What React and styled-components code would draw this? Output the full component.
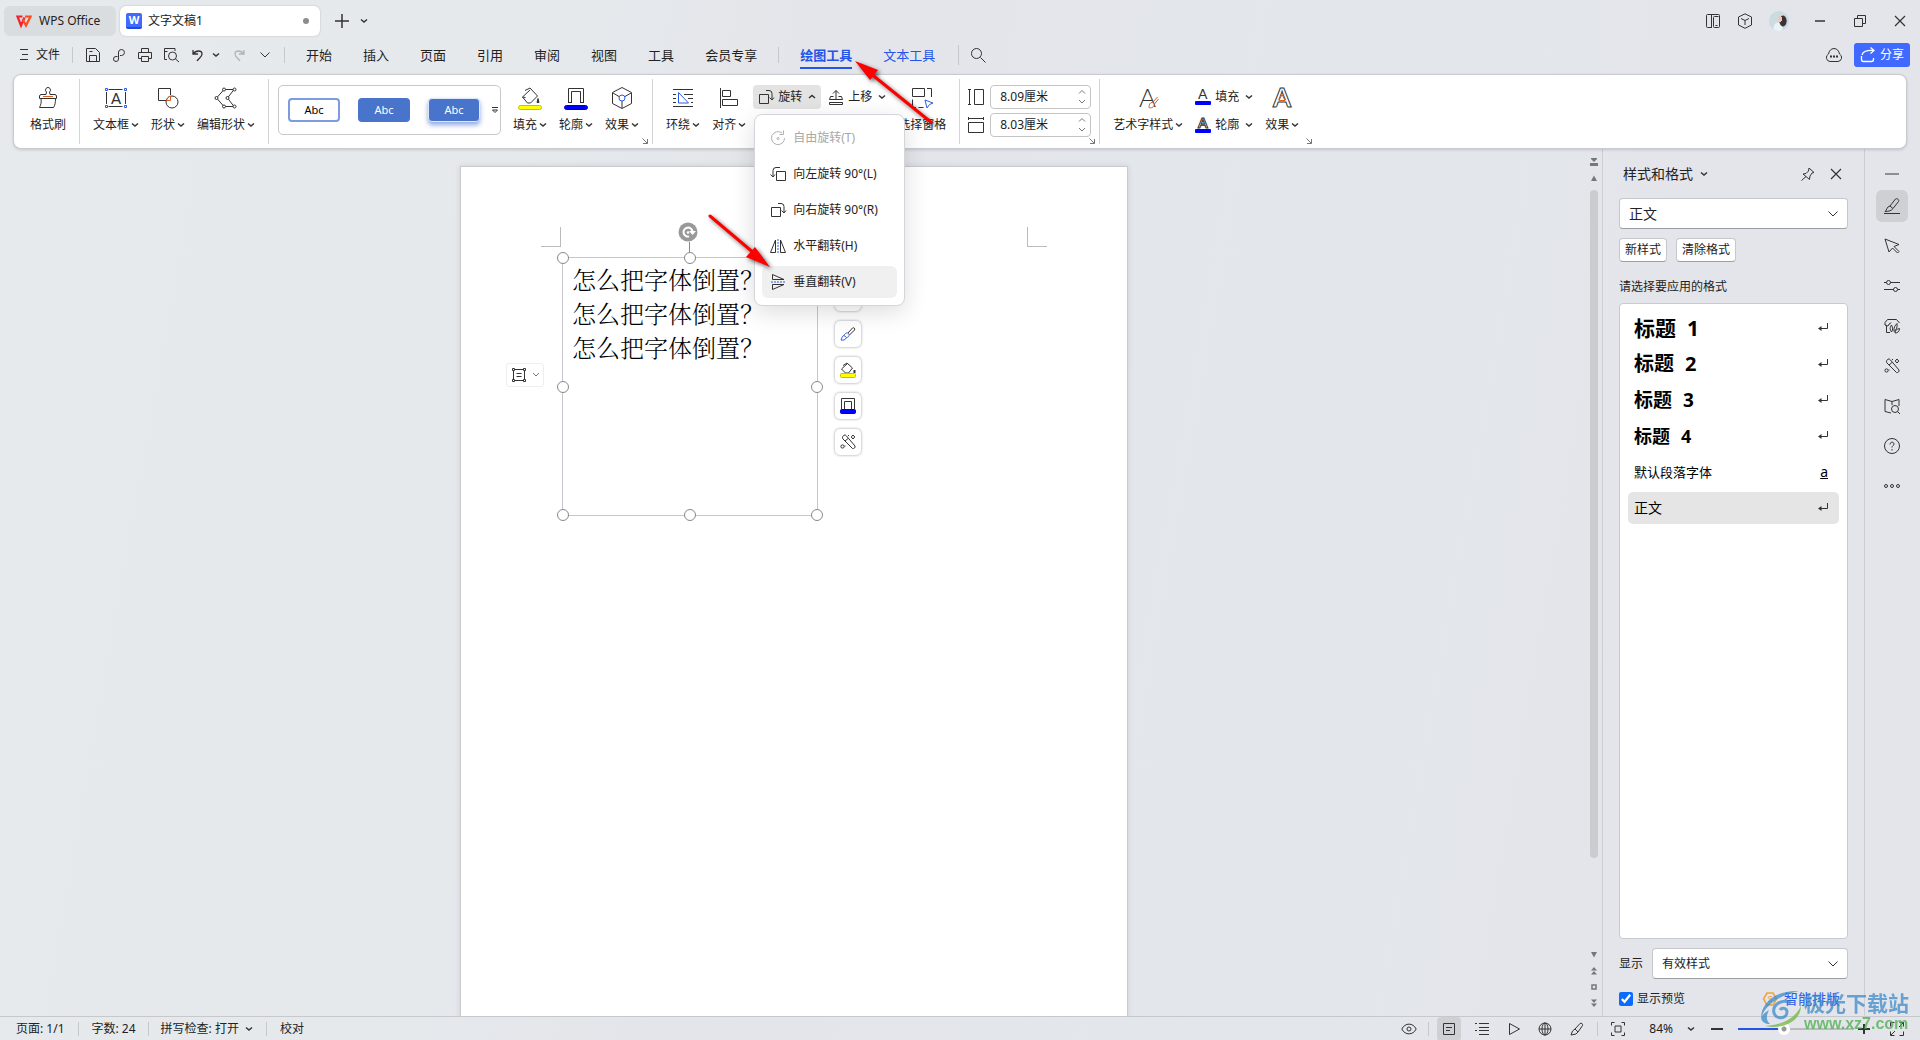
import React from "react";
import styled, { createGlobalStyle } from "styled-components";

const GlobalStyle = createGlobalStyle`
  * {
    box-sizing: border-box;
  }
  body {
    margin: 0;
    font-family: "Noto Sans", "Noto Sans CJK SC", sans-serif;
    font-size: 12px;
    line-height: 16px;
    color: #222;
  }
  button, input, select {
    font: inherit;
    color: inherit;
  }
  button {
    border: none;
    background: none;
    padding: 0;
    cursor: pointer;
  }
`;

/* ---------- icons ---------- */

// every icon is [width, height, shapes]
const icons = {
  wps: [16, 12, <g strokeWidth="2.200"><path d="M6.500 1.500H1.500L5 10.500l3.500-8" stroke="#f0222c" /><path d="M6.500 4l3.500 6.500 4.500-9H9" stroke="#ff4a1c" /></g>],
  plus: [16, 16, <path d="M8 1v14M1 8h14" strokeWidth="1.500" />],
  down: [8, 6, <path d="M1 1.500l3 2.500 3-2.500" strokeWidth="1.500" />],
  up: [8, 6, <path d="M1 4l3-2.500L7 4" strokeWidth="1.500" />],
  wide: [12, 8, <path d="M1.500 1.500L6 6l4.500-4.500" />],
  thin: [8, 6, <path d="M1 1l3 3 3-3" stroke="#777" />],
  thinUp: [8, 6, <path d="M1 4.500l3-3 3 3" stroke="#777" />],
  menu: [10, 12, <path d="M0 .5h8M2 5.500h6M0 10.500h8" />],
  save: [16, 16, <path d="M1.500 2v12.500h13V5.500L10.500 1.500h-9zM4.500 14.500v-6h7v6M4.500 4.500h3" />],
  link: [16, 16, <path d="M6.500 9.500H5A2.500 2.500 0 1 0 7.500 12V5a3 3 0 1 1 3 3.500H9" />],
  print: [16, 16, <path d="M4.500 5V1.500h7V5M4 11.500H1.500v-6h13v6H12M4.500 9.500h7v5h-7z" />],
  preview: [17, 16, <g><path d="M4 12.500H1.500v-11H12V4M1.500 4.500h3" /><circle cx="9.500" cy="9" r="4" /><path d="M12.500 12l3.500 3" /></g>],
  undo: [14, 14, <path d="M2 2v4h5M2 6c3-4 9-4 9 0 0 3-3 4-5 7" strokeWidth="1.300" />],
  redo: [14, 14, <path d="M12 2v4H7M12 6C9 2 3 2 3 6c0 3 3 4 5 7" stroke="#b0b3b8" strokeWidth="1.300" />],
  search: [16, 16, <g><circle cx="6.500" cy="6.500" r="5" /><path d="M10.500 10.500l5 5" /></g>],
  split: [16, 16, <path d="M7 14.500H2.500a1 1 0 0 1-1-1v-11a1 1 0 0 1 1-1h11a1 1 0 0 1 1 1v11a1 1 0 0 1-1 1h-4a1 1 0 0 1-1-1v-9a1 1 0 0 1 1-1h4M6.500 1.500v13M10.500 12.500h2" />],
  cube: [16, 16, <path d="M8 .8l6.500 3.200v8L8 15.300 1.500 12V4zM4 5.500l4 2 4-2M8 7.500V12" />],
  min: [12, 12, <path d="M1 6h10" strokeWidth="1.500" />],
  restore: [12, 12, <path d="M.5 3.500h8v8h-8zM3.500 3.500v-3h8v8h-3" />],
  close: [12, 12, <path d="M1 1l10 10M11 1L1 11" strokeWidth="1.200" />],
  cloud: [18, 16, <g><path d="M5 14.500a4 4 0 0 1-1.500-7.500C4 4 6 1.500 9 1.500S14 4 14.500 7A4 4 0 0 1 13 14.500z" /><path d="M5 9.500h2M8 9.500h2M11 9.500h2" strokeWidth="2" /></g>],
  share: [16, 16, <path d="M1.500 9v3.500a2 2 0 0 0 2 2h8a2 2 0 0 0 2-2V11M2 8c1-4 5-5 12-4.500M10.500 .5l3.500 3-3.500 3" stroke="#fff" strokeWidth="1.300" />],
  brush: [24, 24, <g><path d="M10 8.500l.5-2.500a2.500 2.500 0 1 1 3 0l.5 2.500h5a2 2 0 0 1 1.500 1.500v2.500H3.500V10A2 2 0 0 1 5 8.500zM5 12.500c.5 4 0 6-1.500 9h14c1.500-2 2-5 2-9" /><path d="M7 10.500h10" stroke="#d9601f" /></g>],
  textbox: [24, 24, <g><path d="M4.500 3.500h14M4.500 20.500h14M2.500 6v12M21.500 6v12" /><path d="M1.500 2.500h2v2h-2zM20.500 2.500h2v2h-2zM1.500 19.500h2v2h-2zM20.500 19.500h2v2h-2z" stroke="#2c5be8" /><text x="7" y="18" fontSize="15" fontFamily="Lato">A</text></g>],
  shapes: [24, 24, <g><path d="M12 14.500H2.500v-12h12V9" /><circle cx="16" cy="16" r="6" /><path d="M14.500 10v4.500H10.500c.5-2 2-4 4-4.500z" stroke="#d9601f" /></g>],
  editShape: [24, 24, <g><path d="M2.500 12L10 3.500h10L13.500 12l6.500 8.500H10z" /><g fill="#fff"><circle cx="2.500" cy="12" r="1.500" /><circle cx="10" cy="3.500" r="1.500" /><circle cx="20.500" cy="3.500" r="1.500" /><circle cx="13.500" cy="12" r="1.500" /><circle cx="20.500" cy="20.500" r="1.500" /><circle cx="10" cy="20.500" r="1.500" /></g></g>],
  fill: [24, 24, <g><path d="M7 4.500L12 2l7.500 8-7 7h-3L4.500 11 12 4M4.500 11l3 .5" /><path d="M20 12.500l1 4h-2z" fill="#333" /><rect x=".5" y="19.500" width="23" height="4" rx="2" fill="#ff0" stroke="#c2c200" /></g>],
  outline: [24, 24, <g><path d="M4.500 17V2.500h15V17M7.500 17V5.500h9V17M4.500 16.500h3M16.500 16.500h3" /><rect x=".5" y="19.500" width="23" height="4" rx="2" fill="#00f" stroke="#0000c8" /></g>],
  effect: [24, 24, <g><path d="M12 1.500L21.500 6.500v11L12 22.500 2.500 17.500v-11zM3 7l6 3.500M21 7l-6 3.500M12 15v7" /><circle cx="12" cy="12" r="3" stroke="#2c5be8" /></g>],
  wrap: [24, 24, <g><path d="M2 3.500h20M2 20.500h20M2 8.500h3M2 12.500h3M2 16.500h3M13 8.500h9M17 12.500h5M20 16.500h2" /><path d="M7.500 6.500v10.500h10z" stroke="#2c5be8" /></g>],
  align: [24, 24, <path d="M3.500 2v20M5.500 4.500h8v6h-8zM5.500 13.500h15v6h-15z" />],
  rotR: [16, 16, <path d="M1.500 5.500h9v9h-9zM8 1.500h3a3 3 0 0 1 3 3v6M11.500 8.500l2.500 2.500 2-2.500" />],
  rotL: [16, 16, <path d="M6.500 5.500h9v9h-9zM10 1.500H6a3 3 0 0 0-3 3v6M.5 8.500l2.500 2.500 2-2.500" />],
  forward: [16, 16, <path d="M8 10V1.500M5 4.500l3-3 3 3M5.500 7.500h-3l-1 3h13l-1-3h-3M1.500 13.500h13v2h-13z" />],
  pane: [24, 24, <g><path d="M2.500 2.500h12v8h-12zM17 2.500h4.500v8.500M2.500 13.500v8H6M8.500 21.500h5" /><path d="M15 14l8 3-3.500 1.500L17 22z" stroke="#2c5be8" /></g>],
  height: [16, 16, <path d="M1.500 .5v15M0 .5h3M0 15.500h3M6.500 .5h9v15h-9z" />],
  width: [16, 16, <path d="M.5 1.500h15M.5 0v3M15.500 0v3M.5 5.500h15v10H.5z" />],
  wordArt: [24, 24, <g><text x="3" y="21" fontSize="26" fontFamily="Lato" fontWeight="300">A</text><path d="M13 21.500c0-3 1-5 3-5s3 3 1 4.500-4 .5-4 .5zM17 16l4.500-5M18.500 18l4-5" stroke="#d9601f" fill="#fff" /></g>],
  textFill: [16, 16, <g><text x="3" y="10" fontSize="14" fontFamily="Lato">A</text><rect y="12" width="16" height="4" rx="1" fill="#00f" stroke="none" /></g>],
  textLine: [16, 16, <g><text x="3" y="11" fontSize="14" fontFamily="Lato" fontWeight="700" stroke="#333">A</text><rect y="12" width="16" height="4" rx="1" fill="#00f" stroke="none" /></g>],
  textEffect: [24, 24, <g><text x="3" y="21" fontSize="26" fontFamily="Lato" fontWeight="700" stroke="#333">A</text><path d="M12 8.500l3 6H9z" stroke="#d9601f" fill="#fff" /></g>],
  launcher: [6, 6, <path d="M.5 .5l5 5M5.500 1v4.500H1" stroke="#777" />],
  more: [8, 8, <path d="M1 1.500h6M1.500 4L4 6.500 6.500 4z" />],
  free: [16, 16, <g stroke="#b0b0b0"><path d="M12 3a6.500 6.500 0 1 0 2.500 5M9.500 4.500h4v-4" /><circle cx="8" cy="8.500" r="1" /></g>],
  flipH: [16, 16, <g><path d="M5.500 2v12.500h-5zM10.500 2v12.500h5z" /><path d="M8 1v14" stroke="#2c5be8" strokeDasharray="2 1" /></g>],
  flipV: [16, 16, <g><path d="M2.500 5.500v-5L14 5.500zM2.500 10.500v5L14 10.500z" /><path d="M1 8h15" stroke="#2c5be8" strokeDasharray="2 1" /></g>],
  turn: [20, 20, <g><circle cx="10" cy="10" r="9.500" fill="#999" stroke="none" /><path d="M11 14.500a4.500 4.500 0 1 1 3.500-5" stroke="#fff" strokeWidth="2" /><path d="M11 9h7l-3.500 4z" fill="#fff" stroke="none" /><circle cx="10" cy="10.500" r="1.300" fill="#fff" stroke="none" /></g>],
  options: [16, 16, <g><path d="M3 2.500h9M3 13.500h9M2.500 3v10M13.500 3v10M5.500 6.500h5M5.500 9.500h5" /><path d="M1.500 1.500h2v2h-2zM12.500 1.500h2v2h-2zM1.500 12.500h2v2h-2zM12.500 12.500h2v2h-2z" fill="#fff" /></g>],
  pen: [16, 16, <g><path d="M8 7l4.500-5c1-1 3 .5 2 2L9.500 9" /><path d="M1 14c1-1 .5-4 3-4.500C5 7.500 7 6 8.500 7.500s0 4-2 4C5.500 14 3 14.500 1 14zM4 9.500l2.500 2" stroke="#2c5be8" /></g>],
  fillS: [16, 16, <g><path d="M3 3.500L7 1l5.500 5-4 5h-3L1.500 7 7 2" /><path d="M14.500 8v3" strokeWidth="2" /><rect x=".5" y="11.500" width="15" height="4" rx="1" fill="#ff0" stroke="#c2c200" /></g>],
  outlineS: [16, 16, <g><path d="M1.500 11V.5h13V11M4.500 11V3.500h7V11" /><rect x=".5" y="11.500" width="15" height="4" rx="1" fill="#00f" stroke="#0000c8" /></g>],
  wand: [16, 16, <g><path d="M3.500 1.500a2 2 0 0 1 3 .5l8.500 10c.5 1.500-1 3-2.500 2.500L3 5c-1-1-.5-2.500.5-3.500zM5 7l3-2.500" /><circle cx="2.500" cy="12.500" r="1.600" /><path d="M8 1.500h1M5 11.500v1" /><path d="M13 1l1.800 2L13 5l-1.800-2z" /></g>],
  pin: [14, 14, <path d="M8 1l5 4.500-2 .5-2 3-.5 3.500L2 7l3-.5L7.500 4zM5 9.500L.5 13.500" />],
  dash: [14, 4, <path d="M0 2h14" stroke="#8d8e92" strokeWidth="2" />],
  format: [16, 16, <path d="M0 15.500h16M1 13.500c2-1 1.500-5 5-5.500l5.500-7c1.500-1 4 .5 3 2.500L9 10.500c-1.500 2-4 3-8 3zM6 8l3 2.500" />],
  cursor: [16, 16, <path d="M1 1l14 5.500-5 2 5 5-1.500 1.500-5-5L5 14z" />],
  sliders: [16, 16, <g><path d="M0 4.500h2.500M6.500 4.500H16M0 11.500h9.500M13.500 11.500H16" /><circle cx="4.500" cy="4.500" r="2" /><circle cx="11.500" cy="11.500" r="2" /></g>],
  image: [16, 16, <path d="M2.500 7v7.500H6M1 6.500V4.500L3.500 1.500h9L15.500 5M1 6a2 2 0 0 0 4 0 2 2 0 0 0 2-1.500M7.500 14c-2-3-1.500-5 0-7 1.500 3 1.500 5 0 7zM10 13.500c-.5-4 1-6 3-8 .5 4-.5 6-3 8zM11 15c0-3 2-4 4.500-4.500 0 3-2 4.500-4.500 4.500z" />],
  book: [16, 16, <g><path d="M8 3.500L1 1.500v12l6 1.500M8 3.500l7-2V8M8 3.500V7" /><circle cx="11" cy="11" r="3.500" /><path d="M13.500 13.500L16 16" /></g>],
  help: [16, 16, <g><circle cx="8" cy="8" r="7.500" /><path d="M6 6.500c0-3 4-3 4-.5 0 1.500-2 1.500-2 3.500M8 11v1.500" /></g>],
  dots: [16, 16, <g><circle cx="2" cy="8" r="1.500" /><circle cx="8" cy="8" r="1.500" /><circle cx="14" cy="8" r="1.500" /></g>],
  enter: [10, 10, <g><path d="M9.500 0v5.500H1" /><path d="M0 5.500L3.500 3v5z" fill="#333" stroke="none" /></g>],
  eye: [16, 16, <g><path d="M.8 8C4 1.500 12 1.500 15.200 8 12 14.500 4 14.500.8 8z" /><circle cx="8" cy="8" r="2" /></g>],
  doc: [14, 14, <path d="M1.500 1.500h11v11h-11zM4 5.500h6M4 8.500h4" />],
  outlineView: [14, 14, <path d="M0 1.500h2M4 1.500h10M4 5.500h10M0 8.500h2M4 8.500h10M4 12.500h10" />],
  play: [14, 14, <path d="M2.500 1.500l10 5.500-10 5.500z" />],
  globe: [14, 14, <g><circle cx="7" cy="7" r="6" /><ellipse cx="7" cy="7" rx="3" ry="6" /><path d="M1 7h12M7 1v12" /></g>],
  marker: [14, 14, <path d="M5 7l5-5.500c1.500-1 3 .5 2.500 2L8 10M5 7l3 3-2 2-5 1 1.500-4z" />],
  fit: [14, 14, <path d="M.5 3.500v-3h3M10.500 .5h3v3M13.500 10.500v3h-3M3.500 13.500h-3v-3M4 4h6v6H4z" />],
  full: [14, 14, <path d="M.5 4.500v-4h4M9.500 .5h4v4M13.500 9.500v4h-4M4.500 13.500h-4v-4M9 5l4-4M5 9l-4 4" />],
  minus: [12, 12, <path d="M0 6h12" strokeWidth="2" />],
  add: [12, 12, <path d="M0 6h12M6 1v10" strokeWidth="2" />],
  markTop: [8, 8, <g stroke="none" fill="#777"><path d="M1 0h6v1L4 4 1 1zM0 5h8v3H0z" /></g>],
  triUp: [6, 6, <path d="M3 .5L6 6H0z" fill="#777" stroke="none" />],
  triDown: [6, 6, <path d="M3 5.500L6 0H0z" fill="#777" stroke="none" />],
  pageUp: [6, 8, <path d="M3 0l3 3.500H0zM3 4l3 3.500H0z" fill="#777" stroke="none" />],
  pageDown: [6, 8, <path d="M3 8L0 4.500h6zM3 4L0 .5h6z" fill="#777" stroke="none" />],
  browse: [6, 6, <path d="M1 1h4v4H1z" stroke="#777" strokeWidth="1.500" />],
  coin: [14, 14, <g stroke="#f0a23c"><path d="M4 1h6l3.500 6L10 13H4L.5 7z" strokeWidth="1.500" /><path d="M9 4.500H6.500c-1.500 0-1.500 2 0 2.500h1c1.500.5 1.500 2.500 0 2.500H5" /></g>],
};

const Svg = styled.svg`
  display: block;
  flex: none;
  overflow: visible;
  fill: none;
  stroke: #333;

  text {
    fill: #333;
    stroke: none;
  }
  text[stroke] {
    fill: #fff;
    stroke: #333;
  }
`;

function Icon({ name }) {
  const [w, h, shape] = icons[name];
  return <Svg width={w} height={h} viewBox={`0 0 ${w} ${h}`} aria-hidden="true">{shape}</Svg>;
}

/* ---------- shell ---------- */

const Shell = styled.div`
  position: relative;
  display: flex;
  flex-direction: column;
  height: 100vh;
  overflow: hidden;
  background: linear-gradient(100deg, #e6eaec 0%, #e5e9ec 25%, #e4e5ea 40%, #e3e7eb 70%, #e4e5ea 82%);
`;

const TitleBar = styled.header`
  display: flex;
  align-items: center;
  height: 36px;
  padding: 6px 10px 0 4px;
`;

const WindowTab = styled.button`
  display: flex;
  align-items: center;
  gap: ${(p) => (p.$active ? 6 : 7)}px;
  width: ${(p) => (p.$active ? 200 : 112)}px;
  height: 30px;
  margin-right: 4px;
  padding: 0 ${(p) => (p.$active ? "11px 0 6px" : "12px")};
  border-radius: 6px;
  background: ${(p) => (p.$active ? "#fff" : "#dadddf")};
  box-shadow: ${(p) => (p.$active ? "0 0 2px #b4b7ba" : "none")};
`;

const DocLogo = styled.span`
  width: 16px;
  height: 16px;
  border-radius: 2px;
  border-bottom: 2px solid #1f49d8;
  background: #3f69ff;
  color: #fff;
  font: bold 11px/14px "Open Sans", sans-serif;
  text-align: center;
`;

const Dirty = styled.span`
  width: 6px;
  height: 6px;
  margin-left: auto;
  border-radius: 3px;
  background: #8c8c8c;
`;

const IconButton = styled.button`
  display: flex;
  align-items: center;
  justify-content: center;
  flex: none;
  width: ${(p) => p.$w || 26}px;
  height: ${(p) => p.$h || 24}px;
  border-radius: ${(p) => p.$round || 4}px;
  background: ${(p) => (p.$active ? "#cfd0d4" : "none")};
`;

const Right = styled.div`
  display: flex;
  align-items: center;
  margin-left: auto;
`;

const Avatar = styled.span`
  width: 20px;
  height: 20px;
  margin: 0 21px 0 8px;
  border-radius: 50%;
  background:
    radial-gradient(ellipse 2px 3px at 11px 8px, #ecc9bd 90%, transparent),
    radial-gradient(ellipse 4px 6px at 14px 10px, #3d3138 80%, transparent),
    radial-gradient(ellipse 5px 6px at 9px 17px, #e9f3f5 80%, transparent),
    #cbdbe0;
`;

const MenuBar = styled.nav`
  display: flex;
  align-items: center;
  height: 38px;
  padding: 0 10px 0 20px;
`;

const FileButton = styled.button`
  display: flex;
  align-items: center;
  gap: 6px;
`;

const Split = styled.span`
  flex: none;
  width: 1px;
  height: ${(p) => p.$h || 16}px;
  margin: 0 ${(p) => p.$after || p.$gap || 12}px 0 ${(p) => p.$gap || 12}px;
  background: #c6c8cb;
`;

const Tabs = styled.div`
  display: flex;
  align-items: center;
  gap: 31px;
`;

const Tab = styled.button`
  position: relative;
  height: 28px;
  font-size: 13px;
  color: ${(p) => (p.$blue ? "#2554e8" : "#222")};
  font-weight: ${(p) => (p.$active ? 700 : 400)};
  border-top: 2px solid transparent;
  border-bottom: 2px solid ${(p) => (p.$active ? "#2554e8" : "transparent")};
`;

const ShareButton = styled.button`
  display: flex;
  align-items: center;
  gap: 4px;
  height: 24px;
  margin-left: 11px;
  padding: 0 6px;
  border-radius: 3px;
  background: #3f69ff;
  color: #fff;
`;

/* ---------- ribbon ---------- */

const Ribbon = styled.section`
  display: flex;
  position: relative;
  z-index: 2;
  height: 75px;
  margin: 0 13px;
  padding: 4px 0;
  border: 1px solid #c9cbcf;
  border-radius: 8px;
  background: #fff;
  box-shadow: 0 1px 3px rgba(0, 0, 0, 0.15);
`;

const Group = styled.div`
  display: flex;
  gap: 12px;
  position: relative;
  padding: 6px ${(p) => p.$right ?? 13}px 0 ${(p) => p.$left ?? 13}px;
  border-right: ${(p) => (p.$last ? "none" : "1px solid #d5d5d5")};
`;

const BigButton = styled.button`
  display: flex;
  flex-direction: column;
  align-items: center;
  align-self: flex-start;
  gap: 6px;

  > svg {
    margin: 1px 0;
  }
`;

const Caption = styled.span`
  display: flex;
  align-items: center;
  gap: 2px;
  white-space: nowrap;
`;

const Gallery = styled.div`
  display: flex;
  align-items: center;
  gap: 18px;
  width: 223px;
  height: 50px;
  padding-left: 9px;
  border: 1px solid #c8c8c8;
  border-radius: 5px;
`;

const Swatch = styled.button`
  flex: none;
  width: 52px;
  height: 24px;
  border-radius: 4px;
  border: ${(p) => (p.$kind === "line" ? "2px solid #7d9be0" : p.$kind === "glow" ? "1px solid #dfe7f8" : "none")};
  background: ${(p) => (p.$kind === "line" ? "#fff" : "#4874cb")};
  color: ${(p) => (p.$kind === "line" ? "#000" : "#fff")};
  box-shadow: ${(p) => (p.$kind === "glow" ? "0 3px 5px #8ea8e0" : "none")};
  font-size: 11px;
  line-height: 14px;
`;

const GalleryMore = styled.button`
  margin-left: -7px;
`;

const Stack = styled.div`
  display: flex;
  flex-direction: column;
  gap: 4px;
`;

const ArrangeRow = styled.div`
  display: flex;
  gap: 2px;
  margin: 0 -5px;
`;

const SmallButton = styled.button`
  display: flex;
  align-items: center;
  gap: 4px;
  height: 24px;
  padding: 0 ${(p) => (p.$tight ? 0 : 5)}px;
  border-radius: 4px;
  background: ${(p) => (p.$open ? "#e3e3e3" : "none")};

  > svg:last-child {
    margin-left: 2px;
  }
`;

const Anchor = styled.div`
  position: relative;
`;

const Launcher = styled.button`
  position: absolute;
  right: ${(p) => (p.$last ? 0 : 4)}px;
  bottom: 0;
`;

const Field = styled.label`
  display: flex;
  align-items: center;
  gap: 6px;
`;

const SpinBox = styled.span`
  display: flex;
  width: 101px;
  height: 24px;
  padding: 0 4px 0 9px;
  border: 1px solid #c4c4c4;
  border-radius: 4px;

  input {
    flex: 1;
    min-width: 0;
    padding: 0;
    border: none;
    outline: none;
    background: none;
  }
`;

const Steps = styled.span`
  display: flex;
  flex-direction: column;
  justify-content: space-between;
  padding: 3px 0;
`;

/* ---------- drop-down menu ---------- */

const Menu = styled.ul`
  position: absolute;
  top: 29px;
  left: 1px;
  display: flex;
  flex-direction: column;
  gap: 4px;
  width: 151px;
  margin: 0;
  padding: 7px;
  list-style: none;
  border: 1px solid #d4d5da;
  border-radius: 8px;
  background: #fff;
  box-shadow: 0 6px 24px rgba(0, 0, 0, 0.14);
`;

const MenuItem = styled.button`
  display: flex;
  align-items: center;
  gap: 7px;
  width: 100%;
  height: 32px;
  padding-left: 8px;
  border-radius: 6px;
  white-space: nowrap;
  background: ${(p) => (p.$hover ? "#f0f0f0" : "none")};
  color: #222;

  &:disabled {
    color: #a8a8a8;
  }
`;

/* red pointer laid over whatever it points at */
const Pointer = styled.svg`
  position: absolute;
  z-index: 5;
  top: ${(p) => p.$top}px;
  left: ${(p) => p.$left}px;
  overflow: visible;
  pointer-events: none;
  fill: #f00;
  stroke: #f00;
  filter: drop-shadow(2px 2px 2px rgba(0, 0, 0, 0.6));
`;

/* ---------- work area ---------- */

const Body = styled.div`
  display: flex;
  flex: 1;
  min-height: 0;
`;

const Canvas = styled.main`
  flex: 1;
  min-width: 0;
  padding-top: 17px;
  overflow: hidden;
`;

const Page = styled.article`
  width: 668px;
  height: 943px;
  margin: 0 auto;
  padding-top: 60px;
  border: 1px solid #c9cbcd;
  background: #fff;
  box-shadow: 0 0 6px rgba(0, 0, 0, 0.1);
`;

const Corners = styled.div`
  display: flex;
  justify-content: space-between;
  height: 20px;
  padding: 0 80px;
`;

const Corner = styled.span`
  width: 20px;
  border-bottom: 1px solid #bbb;
  border-right: ${(p) => (p.$left ? "1px solid #bbb" : "none")};
  border-left: ${(p) => (p.$left ? "none" : "1px solid #bbb")};
`;

const TextBox = styled.div`
  position: relative;
  width: 256px;
  height: 259px;
  margin: 10px 0 0 101px;
  padding: 4px 9px;
  border: 1px solid #c5c6ce;
`;

const Line = styled.p`
  margin: 0;
  font: 24px/34px "Noto Serif CJK SC", "Noto Sans CJK SC", serif;
  font-weight: 300;
  color: #000;
  white-space: nowrap;
`;

const Handle = styled.span`
  position: absolute;
  left: ${(p) => p.$x}%;
  top: ${(p) => p.$y}%;
  width: 12px;
  height: 12px;
  margin: -6px;
  border: 1px solid #888;
  border-radius: 50%;
  background: #fff;
`;

const TurnHandle = styled.button`
  position: absolute;
  top: -36px;
  left: 115px;

  &::after {
    content: "";
    position: absolute;
    top: 20px;
    left: 11px;
    height: 10px;
    border-left: 1px solid #888;
  }
`;

const LayoutButton = styled.button`
  position: absolute;
  top: 105px;
  left: -57px;
  display: flex;
  align-items: center;
  justify-content: center;
  gap: 5px;
  width: 38px;
  height: 24px;
  border: 1px solid #eee;
  border-radius: 3px;
  background: #fff;
`;

const FloatBar = styled.div`
  position: absolute;
  top: 27px;
  right: -44px;
  display: flex;
  flex-direction: column;
  gap: 10px;
`;

const FloatButton = styled.button`
  display: flex;
  align-items: center;
  justify-content: center;
  width: 26px;
  height: 26px;
  border-radius: 5px;
  background: #fff;
  box-shadow: 0 0 3px rgba(0, 0, 0, 0.4);
`;

const ScrollColumn = styled.div`
  display: flex;
  flex-direction: column;
  align-items: center;
  gap: 9px;
  width: 14px;
  padding: 9px 3px 9px 0;
`;

const Thumb = styled.span`
  width: 8px;
  height: 668px;
  margin-bottom: auto;
  border-radius: 4px;
  background: #cbccd0;
`;

/* ---------- style panel ---------- */

const Panel = styled.aside`
  display: flex;
  flex-direction: column;
  width: 262px;
  padding: 14px 16px 5px;
  border-left: 1px solid #cdced2;
`;

const PanelHead = styled.div`
  display: flex;
  align-items: center;
  gap: 7px;
  height: 22px;
  margin: 0 6px 13px 4px;
`;

const PanelTitle = styled.h2`
  margin: 0;
  font-size: 14px;
  font-weight: 400;
`;

const SelectBox = styled.span`
  display: flex;
  align-items: center;
  flex: ${(p) => (p.$grow ? 1 : "none")};
  height: 31px;
  border: 1px solid #c6c7cb;
  border-bottom-color: #9d9ea2;
  border-radius: 4px;
  background: #fff;

  select {
    flex: 1;
    height: 28px;
    padding-left: 9px;
    border: none;
    outline: none;
    appearance: none;
    background: none;
    font-size: ${(p) => (p.$grow ? 12 : 14)}px;
  }
  svg {
    margin-right: 8px;
  }
`;

const PanelButtons = styled.div`
  display: flex;
  gap: 9px;
  margin: 9px 0 17px;
`;

const PanelButton = styled.button`
  height: 24px;
  padding: 0 5px;
  border: 1px solid #c6c7cb;
  border-bottom-color: #9d9ea2;
  border-radius: 4px;
  background: #fff;
`;

const StyleList = styled.ul`
  display: flex;
  flex-direction: column;
  flex: 1;
  gap: 4px;
  margin: 8px 0 9px;
  padding: 8px;
  list-style: none;
  border: 1px solid #c9cacf;
  border-radius: 4px;
  background: #fff;
`;

const StyleItem = styled.button`
  display: flex;
  align-items: center;
  gap: 11px;
  width: 100%;
  height: 32px;
  padding: 0 11px 0 6px;
  border-radius: 5px;
  background: ${(p) => (p.$selected ? "#e5e5e5" : "none")};
  color: #000;
  font-size: ${(p) => p.$size}px;
  font-weight: ${(p) => (p.$bold ? 700 : 400)};

  > :last-child {
    margin-left: auto;
  }
`;

const CharMark = styled.span`
  font-size: 14px;
  text-decoration: underline;
`;

const FootRow = styled.div`
  display: flex;
  align-items: center;
  gap: 9px;

  & + & {
    margin-top: 8px;
  }
`;

const Preview = styled.label`
  display: flex;
  align-items: center;
  gap: 4px;
  height: 24px;

  input {
    width: 14px;
    height: 14px;
    margin: 0;
    accent-color: #0a6cff;
  }
`;

const SmartLink = styled.a`
  display: flex;
  align-items: center;
  gap: 7px;
  margin-left: auto;
  padding-right: 8px;
  color: #2c5be8;
  font-size: 14px;
  text-decoration: none;
`;

const SideStrip = styled.aside`
  display: flex;
  flex-direction: column;
  align-items: center;
  gap: 8px;
  width: 56px;
  padding: 17px 1px 0 0;
  border-left: 1px solid #cdced2;
`;

/* ---------- status bar ---------- */

const StatusBar = styled.footer`
  display: flex;
  align-items: center;
  height: 24px;
  padding-left: 16px;
  border-top: 1px solid #c6c8cb;
`;

const StatusText = styled.button`
  display: flex;
  align-items: center;
  gap: 6px;
`;

const ZoomValue = styled(StatusText)`
  padding-left: 18px;
`;

const Zoom = styled.input`
  width: 116px;
  height: 12px;
  margin: 0 0 0 13px;
  appearance: none;
  background: linear-gradient(90deg, #2554e8 40%, #b9bbc0 40%) center / 100% 2px no-repeat;

  &::-webkit-slider-thumb {
    appearance: none;
    width: 12px;
    height: 12px;
    border-radius: 50%;
    background: radial-gradient(circle, #999 2px, #fff 3px);
  }
`;

const Watermark = styled.div`
  position: absolute;
  z-index: 6;
  right: 11px;
  bottom: 8px;
  display: flex;
  align-items: center;
  gap: 3px;
  opacity: 0.75;
  pointer-events: none;
`;

const MarkName = styled.div`
  color: #3c8bc9;
  font: bold 21px/28px "Noto Sans CJK SC", sans-serif;
`;

const MarkUrl = styled.div`
  color: #4cae4f;
  font: bold 16px/16px "Liberation Sans", sans-serif;
`;

/* ---------- pieces ---------- */

function Big({ icon, children, plain }) {
  return (
    <BigButton>
      <Icon name={icon} />
      <Caption>
        {children}
        {!plain && <Icon name="down" />}
      </Caption>
    </BigButton>
  );
}

function Small({ icon, children, open, tight }) {
  return (
    <SmallButton $open={open} $tight={tight}>
      <Icon name={icon} />
      {children}
      <Icon name={open ? "up" : "down"} />
    </SmallButton>
  );
}

function SizeField({ icon, label, value }) {
  return (
    <Field>
      <Icon name={icon} />
      <SpinBox>
        <input aria-label={label} defaultValue={value} />
        <Steps>
          <Icon name="thinUp" />
          <Icon name="thin" />
        </Steps>
      </SpinBox>
    </Field>
  );
}

const tabs = ["开始", "插入", "页面", "引用", "审阅", "视图", "工具", "会员专享"];

const rotateItems = [
  { icon: "free", text: "自由旋转(T)", disabled: true },
  { icon: "rotL", text: "向左旋转 90°(L)" },
  { icon: "rotR", text: "向右旋转 90°(R)" },
  { icon: "flipH", text: "水平翻转(H)" },
  { icon: "flipV", text: "垂直翻转(V)", hover: true },
];

const textStyles = [
  { name: "标题", level: 1, size: 21 },
  { name: "标题", level: 2, size: 20 },
  { name: "标题", level: 3, size: 19 },
  { name: "标题", level: 4, size: 18 },
  { name: "默认段落字体", size: 13, char: true },
  { name: "正文", size: 14, selected: true },
];

const handles = [[0, 0], [50, 0], [100, 0], [0, 50], [100, 50], [0, 100], [50, 100], [100, 100]];
const floatIcons = ["options", "pen", "fillS", "outlineS", "wand"];
const sideIcons = ["cursor", "sliders", "image", "wand", "book", "help", "dots"];

export default function App() {
  return (
    <Shell>
      <GlobalStyle />

      <TitleBar>
        <WindowTab>
          <Icon name="wps" />
          WPS Office
        </WindowTab>
        <WindowTab $active>
          <DocLogo>W</DocLogo>
          文字文稿1
          <Dirty />
        </WindowTab>
        <IconButton $w={36} aria-label="新建"><Icon name="plus" /></IconButton>
        <IconButton $w={8} aria-label="标签列表"><Icon name="down" /></IconButton>
        <Right>
          <IconButton $w={32} aria-label="分屏"><Icon name="split" /></IconButton>
          <IconButton $w={32} aria-label="应用"><Icon name="cube" /></IconButton>
          <Avatar />
          <IconButton $w={20} aria-label="最小化"><Icon name="min" /></IconButton>
          <IconButton $w={60} aria-label="还原"><Icon name="restore" /></IconButton>
          <IconButton $w={20} aria-label="关闭"><Icon name="close" /></IconButton>
        </Right>
      </TitleBar>

      <MenuBar>
        <FileButton><Icon name="menu" />文件</FileButton>
        <Split $after={7} />
        <IconButton aria-label="保存"><Icon name="save" /></IconButton>
        <IconButton aria-label="输出"><Icon name="link" /></IconButton>
        <IconButton aria-label="打印"><Icon name="print" /></IconButton>
        <IconButton aria-label="打印预览"><Icon name="preview" /></IconButton>
        <IconButton $w={28} aria-label="撤销"><Icon name="undo" /></IconButton>
        <IconButton $w={8} aria-label="撤销列表"><Icon name="down" /></IconButton>
        <IconButton $w={38} aria-label="恢复"><Icon name="redo" /></IconButton>
        <IconButton $w={14} aria-label="更多"><Icon name="wide" /></IconButton>
        <Split $after={21} />
        <Tabs>
          {tabs.map((t) => <Tab key={t}>{t}</Tab>)}
        </Tabs>
        <Split $gap={21} />
        <Tabs>
          <Tab $blue $active>
            绘图工具
            <Pointer $top={17} $left={54} width="80" height="66">
              <path d="M1 1L24 10 16 20z" stroke="none" />
              <path d="M16 13L78 63" strokeWidth="3" />
            </Pointer>
          </Tab>
          <Tab $blue>文本工具</Tab>
        </Tabs>
        <Split $gap={23} $after={11} $h={20} />
        <Icon name="search" />
        <Right>
          <Icon name="cloud" />
          <ShareButton><Icon name="share" />分享</ShareButton>
        </Right>
      </MenuBar>

      <Ribbon>
        <Group $left={16}>
          <Big icon="brush" plain>格式刷</Big>
        </Group>
        <Group>
          <Big icon="textbox">文本框</Big>
          <Big icon="shapes">形状</Big>
          <Big icon="editShape">编辑形状</Big>
        </Group>
        <Group $left={9}>
          <Gallery>
            <Swatch $kind="line">Abc</Swatch>
            <Swatch>Abc</Swatch>
            <Swatch $kind="glow">Abc</Swatch>
            <GalleryMore aria-label="更多样式"><Icon name="more" /></GalleryMore>
          </Gallery>
          <Big icon="fill">填充</Big>
          <Big icon="outline">轮廓</Big>
          <Big icon="effect">效果</Big>
          <Launcher aria-label="形状设置"><Icon name="launcher" /></Launcher>
        </Group>
        <Group>
          <Big icon="wrap">环绕</Big>
          <Big icon="align">对齐</Big>
          <ArrangeRow>
            <Anchor>
              <Small icon="rotR" open>旋转</Small>
              <Menu>
                {rotateItems.map((item) => (
                  <li key={item.text}>
                    <MenuItem disabled={item.disabled} $hover={item.hover}>
                      <Icon name={item.icon} />
                      {item.text}
                    </MenuItem>
                  </li>
                ))}
                <Pointer $top={99} $left={-47} width="64" height="54">
                  <path d="M62 53L38 43 47 33z" stroke="none" />
                  <path d="M2 2L47 40" strokeWidth="3" strokeLinecap="round" />
                </Pointer>
              </Menu>
            </Anchor>
            <Small icon="forward">上移</Small>
          </ArrangeRow>
          <Big icon="pane" plain>选择窗格</Big>
        </Group>
        <Group $left={8} $right={8}>
          <Stack>
            <SizeField icon="height" label="高度" value="8.09厘米" />
            <SizeField icon="width" label="宽度" value="8.03厘米" />
          </Stack>
          <Launcher aria-label="大小设置"><Icon name="launcher" /></Launcher>
        </Group>
        <Group $last>
          <Big icon="wordArt">艺术字样式</Big>
          <Stack>
            <Small icon="textFill" tight>填充</Small>
            <Small icon="textLine" tight>轮廓</Small>
          </Stack>
          <Big icon="textEffect">效果</Big>
          <Launcher $last aria-label="文本设置"><Icon name="launcher" /></Launcher>
        </Group>
      </Ribbon>

      <Body>
        <Canvas>
          <Page>
            <Corners>
              <Corner $left />
              <Corner />
            </Corners>
            <TextBox>
              <Line>怎么把字体倒置？</Line>
              <Line>怎么把字体倒置？</Line>
              <Line>怎么把字体倒置？</Line>
              {handles.map(([x, y]) => <Handle key={`${x}-${y}`} $x={x} $y={y} />)}
              <TurnHandle aria-label="旋转"><Icon name="turn" /></TurnHandle>
              <LayoutButton aria-label="布局选项">
                <Icon name="options" />
                <Icon name="thin" />
              </LayoutButton>
              <FloatBar>
                {floatIcons.map((name) => (
                  <FloatButton key={name} aria-label={name}><Icon name={name} /></FloatButton>
                ))}
              </FloatBar>
            </TextBox>
          </Page>
        </Canvas>

        <ScrollColumn>
          <Icon name="markTop" />
          <Icon name="triUp" />
          <Thumb />
          <Icon name="triDown" />
          <Icon name="pageUp" />
          <Icon name="browse" />
          <Icon name="pageDown" />
        </ScrollColumn>

        <Panel>
          <PanelHead>
            <PanelTitle>样式和格式</PanelTitle>
            <Icon name="down" />
            <Right>
              <IconButton $w={44} aria-label="固定"><Icon name="pin" /></IconButton>
              <IconButton $w={12} aria-label="关闭"><Icon name="close" /></IconButton>
            </Right>
          </PanelHead>
          <SelectBox>
            <select aria-label="当前样式"><option>正文</option></select>
            <Icon name="wide" />
          </SelectBox>
          <PanelButtons>
            <PanelButton>新样式</PanelButton>
            <PanelButton>清除格式</PanelButton>
          </PanelButtons>
          <span>请选择要应用的格式</span>
          <StyleList>
            {textStyles.map((s) => (
              <li key={s.name + (s.level || "")}>
                <StyleItem $size={s.size} $bold={s.level} $selected={s.selected}>
                  <span>{s.name}</span>
                  {s.level && <span>{s.level}</span>}
                  {s.char ? <CharMark>a</CharMark> : <Icon name="enter" />}
                </StyleItem>
              </li>
            ))}
          </StyleList>
          <FootRow>
            <label htmlFor="show">显示</label>
            <SelectBox $grow>
              <select id="show"><option>有效样式</option></select>
              <Icon name="wide" />
            </SelectBox>
          </FootRow>
          <FootRow>
            <Preview><input type="checkbox" defaultChecked />显示预览</Preview>
            <SmartLink href="#smart"><Icon name="coin" />智能排版</SmartLink>
          </FootRow>
        </Panel>

        <SideStrip>
          <IconButton $w={32} $h={16} aria-label="收起"><Icon name="dash" /></IconButton>
          <IconButton $w={32} $h={32} $round={6} $active aria-label="样式和格式"><Icon name="format" /></IconButton>
          {sideIcons.map((name) => (
            <IconButton key={name} $w={32} $h={32} aria-label={name}><Icon name={name} /></IconButton>
          ))}
        </SideStrip>
      </Body>

      <StatusBar>
        <StatusText>页面: 1/1</StatusText>
        <Split $h={14} $gap={13} />
        <StatusText>字数: 24</StatusText>
        <Split $h={14} />
        <StatusText>拼写检查: 打开<Icon name="down" /></StatusText>
        <Split $h={14} $gap={13} />
        <StatusText>校对</StatusText>
        <Right>
          <Icon name="eye" />
          <Split $h={14} $gap={11} $after={8} />
          <IconButton $w={24} $active aria-label="页面视图"><Icon name="doc" /></IconButton>
          <IconButton $w={41} aria-label="大纲"><Icon name="outlineView" /></IconButton>
          <IconButton $w={24} aria-label="阅读版式"><Icon name="play" /></IconButton>
          <IconButton $w={38} aria-label="Web版式"><Icon name="globe" /></IconButton>
          <IconButton aria-label="写作模式"><Icon name="marker" /></IconButton>
          <Split $h={14} $gap={7} />
          <IconButton aria-label="适应"><Icon name="fit" /></IconButton>
          <ZoomValue>84%</ZoomValue>
          <IconButton $w={36} aria-label="缩放列表"><Icon name="down" /></IconButton>
          <IconButton $w={16} aria-label="缩小"><Icon name="minus" /></IconButton>
          <Zoom type="range" defaultValue={38} aria-label="缩放" />
          <IconButton $w={20} aria-label="放大"><Icon name="add" /></IconButton>
          <IconButton $w={46} aria-label="全屏"><Icon name="full" /></IconButton>
        </Right>
      </StatusBar>

      <Watermark>
        <svg width="42" height="40" viewBox="0 0 42 40" fill="none" aria-hidden="true">
          <path d="M40 1C18 0 2 12 2 28c4-12 16-22 38-27z" fill="#3c8bc9" />
          <path d="M6 36c20 4 36-6 36-20-6 12-18 19-36 20z" fill="#6fb83f" />
          <path d="M2 28c1 4 4 6 9 6-4-3-4-8-1-14-4 2-7 5-8 8z" fill="#3c8bc9" />
          <path d="M32 13c-9-5-19 2-17 10 2 7 13 6 13-1 0-4-5-5-7-2" stroke="#3c8bc9" strokeWidth="3" />
        </svg>
        <div>
          <MarkName>极光下载站</MarkName>
          <MarkUrl>www.xz7.com</MarkUrl>
        </div>
      </Watermark>
    </Shell>
  );
}
